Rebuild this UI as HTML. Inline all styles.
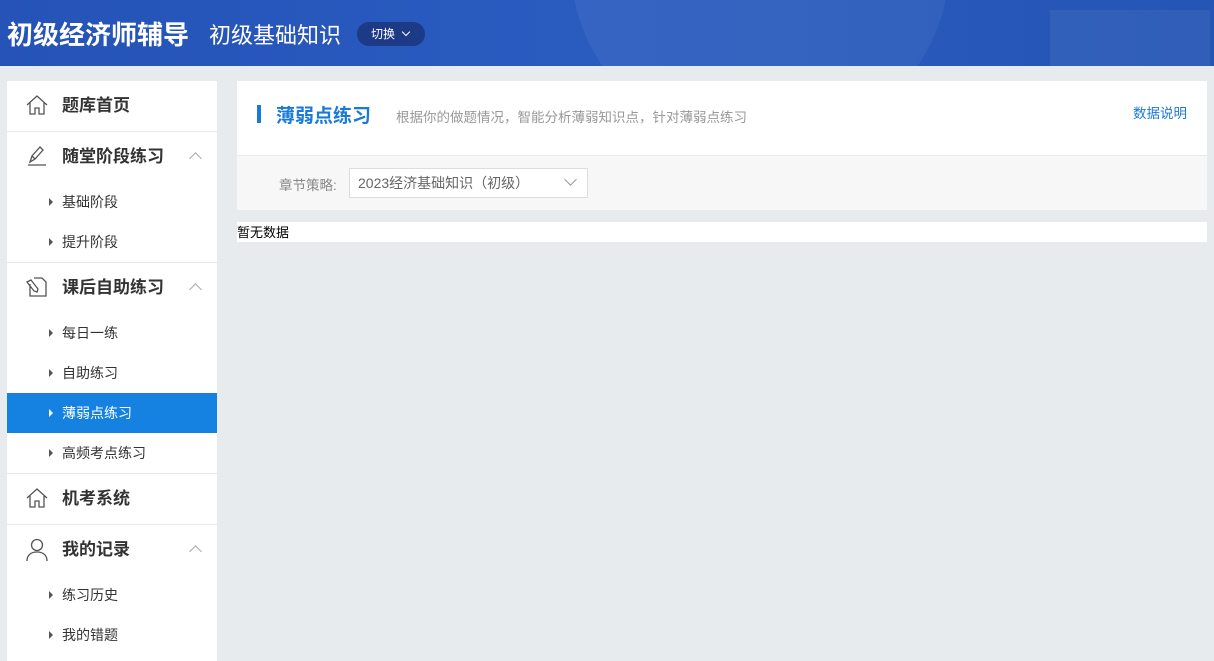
<!DOCTYPE html>
<html><head><meta charset="utf-8"><style>
*{margin:0;padding:0;box-sizing:border-box}
body{width:1214px;height:648px;overflow:hidden;background:#e8ebee;font-family:"Liberation Sans","Noto Sans CJK SC",sans-serif;position:relative}
.hd{position:absolute;left:0;top:0;width:1214px;height:66px;background:linear-gradient(90deg,#2553b8,#2a5cc0 50%,#2555b5);overflow:hidden}
.hd .t1{position:absolute;left:7px;top:15px;color:#fff;font-size:26px;font-weight:bold}
.hd .t2{position:absolute;left:209px;top:18px;color:#fff;font-size:22px}
.hd .sw{position:absolute;left:357px;top:22px;width:68px;height:24px;border-radius:12px;background:#1c3a86;color:#fff;font-size:12px;line-height:24px;padding-left:14px}
.sb{position:absolute;left:7px;top:81px;width:210px;height:580px;background:#fff}
.it{height:51px;border-bottom:1px solid #e8e8e8;position:relative;font-size:17px;font-weight:bold;color:#333;line-height:50px;padding-left:55px}
.it svg{position:absolute;left:19px;top:13px}
.it .ar{position:absolute;left:184px;top:22px;width:9px;height:9px;border-left:1px solid #aaa;border-top:1px solid #aaa;transform:rotate(45deg)}
.sub{height:40px;line-height:40px;font-size:14px;color:#333;padding-left:55px;position:relative}
.sub:before{content:"";position:absolute;left:42px;top:16px;border-left:4px solid #555;border-top:4px solid transparent;border-bottom:4px solid transparent}
.sub.on{background:#1581e0;color:#fff}
.sub.on:before{border-left-color:#fff}
.last{border-bottom:1px solid #e8e8e8;height:41px}
.card{position:absolute;left:237px;top:81px;width:970px;height:74px;background:#fff}
.card .bar{position:absolute;left:20px;top:24px;width:4px;height:18px;background:#1a7ad9}
.card .tt{position:absolute;left:39px;top:20px;font-size:19px;font-weight:bold;color:#1a7ad9}
.card .ds{position:absolute;left:159px;top:25px;font-size:13.5px;color:#999}
.card .lk{position:absolute;right:20px;top:21px;font-size:13.5px;color:#1a7ad9}
.flt{position:absolute;left:237px;top:155px;width:970px;height:55px;background:#f7f7f7;border-top:1px solid #eaeaea}
.flt .lb{position:absolute;left:42px;top:18px;font-size:13.5px;color:#888}
.flt .sel{position:absolute;left:112px;top:12px;width:239px;height:30px;border:1px solid #ddd;background:#fff;font-size:14px;color:#666;line-height:28px;padding-left:8px}
.flt .sel i{position:absolute;right:12px;top:6px;width:9px;height:9px;border-right:1px solid #999;border-bottom:1px solid #999;transform:rotate(45deg)}
.nd{position:absolute;left:237px;top:222px;width:970px;height:20px;background:#fff;font-size:13px;color:#000;line-height:21px}
</style></head><body>
<div class="hd">
<svg width="1214" height="66" style="position:absolute;left:0;top:0;opacity:.05"><circle cx="760" cy="-40" r="190" fill="#fff"/><rect x="1050" y="10" width="160" height="60" fill="#fff"/></svg>
<div class="t1">初级经济师辅导</div><div class="t2">初级基础知识</div>
<div class="sw">切换 <span style="display:inline-block;width:6px;height:6px;border-right:1px solid #fff;border-bottom:1px solid #fff;transform:rotate(45deg);margin:0 0 3px 5px"></span></div>
</div>
<div class="sb">
<div class="it"><svg width="22" height="22" viewBox="0 0 22 22" fill="none" stroke="#555" stroke-width="1.3"><path d="M1 11L11 2l10 9M4 9v11h5v-6h4v6h5V9"/></svg>题库首页</div>
<div class="it" style="border:0;height:50px"><svg width="22" height="22" viewBox="0 0 22 22" fill="none" stroke="#555" stroke-width="1.3"><path d="M4 17l2-6 8-9 3 3-8 9zM6 11l3 3M2 20h18"/></svg>随堂阶段练习<span class="ar"></span></div>
<div class="sub">基础阶段</div><div class="sub last">提升阶段</div>
<div class="it" style="border:0;height:50px"><svg width="22" height="22" viewBox="0 0 22 22" fill="none" stroke="#555" stroke-width="1.3"><path d="M8 2h8l4 4v14H4V8M5 4l7 9-1 3-3-1-7-9z"/></svg>课后自助练习<span class="ar"></span></div>
<div class="sub">每日一练</div><div class="sub">自助练习</div><div class="sub on">薄弱点练习</div><div class="sub last">高频考点练习</div>
<div class="it"><svg width="22" height="22" viewBox="0 0 22 22" fill="none" stroke="#555" stroke-width="1.3"><path d="M1 11L11 2l10 9M4 9v11h5v-6h4v6h5V9"/></svg>机考系统</div>
<div class="it" style="border:0;height:50px"><svg width="22" height="24" viewBox="0 0 22 24" fill="none" stroke="#555" stroke-width="1.3"><circle cx="11" cy="7" r="5.5"/><path d="M1 23c0-6 4-9 10-9s10 3 10 9"/></svg>我的记录<span class="ar"></span></div>
<div class="sub">练习历史</div><div class="sub">我的错题</div>
</div>
<div class="card"><div class="bar"></div><div class="tt">薄弱点练习</div><div class="ds">根据你的做题情况，智能分析薄弱知识点，针对薄弱点练习</div><div class="lk">数据说明</div></div>
<div class="flt"><div class="lb">章节策略:</div><div class="sel">2023经济基础知识（初级）<i></i></div></div>
<div class="nd">暂无数据</div>
</body></html>
